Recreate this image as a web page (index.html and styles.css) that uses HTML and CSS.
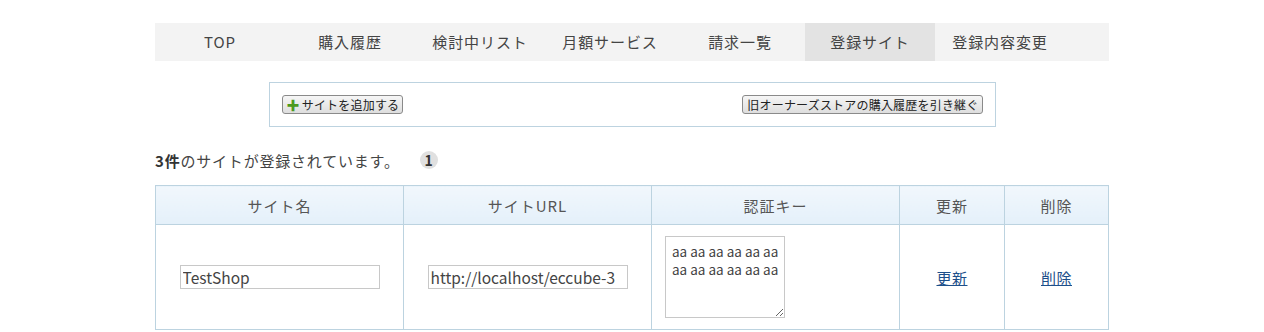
FILE: index.html
```html
<!DOCTYPE html>
<html lang="ja">
<head>
  <meta charset="UTF-8">
  <title>登録サイト</title>
  <link rel="stylesheet" href="styles.css">
</head>
<body>
  <div class="wrap">
    <ul class="gnav">
      <li><a href="#">TOP</a></li>
      <li><a href="#">購入履歴</a></li>
      <li><a href="#">検討中リスト</a></li>
      <li><a href="#">月額サービス</a></li>
      <li><a href="#">請求一覧</a></li>
      <li class="active"><a href="#">登録サイト</a></li>
      <li><a href="#">登録内容変更</a></li>
    </ul>

    <div class="tool-box">
      <button type="button" class="btn"><span class="plus">✚</span>サイトを追加する</button>
      <button type="button" class="btn">旧オーナーズストアの購入履歴を引き継ぐ</button>
    </div>

    <p class="count"><strong>3件</strong>のサイトが登録されています。<span class="badge">1</span></p>

    <table class="site-table">
      <thead>
        <tr>
          <th class="c-name">サイト名</th>
          <th class="c-url">サイトURL</th>
          <th class="c-key">認証キー</th>
          <th class="c-act">更新</th>
          <th>削除</th>
        </tr>
      </thead>
      <tbody>
        <tr>
          <td><input type="text" value="TestShop"></td>
          <td><input type="text" value="http://localhost/eccube-3"></td>
          <td class="key"><textarea>aa aa aa aa aa aa aa aa aa aa aa aa</textarea></td>
          <td><a href="#">更新</a></td>
          <td><a href="#">削除</a></td>
        </tr>
      </tbody>
    </table>
  </div>
</body>
</html>
```

FILE: styles.css
```css
body {
  margin: 0;
  padding: 0;
  font-family: "Noto Sans CJK JP", "Noto Sans", sans-serif;
  color: #444;
  background-color: #fff;
}

.wrap {
  width: 954px;
  margin: 0 auto;
  padding-top: 23px;
}

.gnav {
  display: flex;
  list-style: none;
  margin: 0;
  padding: 0;
  height: 38px;
  background-color: #f3f3f3;
}

.gnav li {
  width: 130px;
}

.gnav a {
  display: block;
  height: 38px;
  line-height: 38px;
  text-align: center;
  font-size: 15px;
  letter-spacing: 0.9px;
  color: #444;
  text-decoration: none;
}

.gnav li.active a {
  background-color: #e3e3e3;
}

.tool-box {
  width: 701px;
  margin: 21px auto 0;
  padding: 12px;
  border: 1px solid #bdd3e0;
  display: flex;
  justify-content: space-between;
  align-items: center;
}

.btn {
  height: 19px;
  padding: 0 3px 0 4px;
  font-family: "Noto Sans CJK JP", sans-serif;
  font-size: 12px;
  letter-spacing: 0.2px;
  line-height: 17px;
  color: #222;
  border: 1px solid #8a8a8a;
  border-radius: 3px;
  background: linear-gradient(#f6f6f6, #dedede);
}

.plus {
  color: #4c9a1e;
  font-size: 13px;
  margin-right: 2px;
}

.count {
  margin: 23px 0 0;
  font-size: 15px;
  letter-spacing: 0.8px;
  line-height: 22px;
}

.count strong {
  color: #333;
}

.badge {
  display: inline-block;
  width: 18px;
  height: 18px;
  line-height: 18px;
  margin-left: 20px;
  border-radius: 50%;
  background-color: #e0e0e0;
  text-align: center;
  font-weight: bold;
  font-size: 14px;
  letter-spacing: 0;
  color: #333;
  vertical-align: 1px;
}

.site-table {
  width: 954px;
  margin-top: 13px;
  border-collapse: collapse;
  table-layout: fixed;
}

.site-table th,
.site-table td {
  border: 1px solid #bcd3e0;
  text-align: center;
}

.site-table th {
  height: 38px;
  padding: 0;
  font-weight: normal;
  font-size: 15px;
  letter-spacing: 1px;
  color: #555;
  background: linear-gradient(#f1f7fc, #e4f0fa);
}

.c-name,
.c-url,
.c-key {
  width: 247px;
}

.c-act {
  width: 104px;
}

.site-table td {
  height: 104px;
  padding: 0;
}

.site-table input {
  width: 200px;
  height: 24px;
  box-sizing: border-box;
  padding: 0 2px;
  border: 1px solid #c8c8c8;
  font-family: "Noto Sans CJK JP", sans-serif;
  font-size: 15.5px;
  color: #444;
}

.site-table td.key {
  text-align: left;
  padding-left: 13px;
}

.site-table textarea {
  display: block;
  width: 120px;
  height: 82px;
  box-sizing: border-box;
  padding: 5px 3px 5px 6px;
  border: 1px solid #c8c8c8;
  font-family: "Noto Sans CJK JP", sans-serif;
  font-size: 13.5px;
  line-height: 18px;
  color: #444;
  resize: both;
}

.site-table a {
  color: #1d4f8a;
  font-size: 15px;
  letter-spacing: 0.5px;
}
```
